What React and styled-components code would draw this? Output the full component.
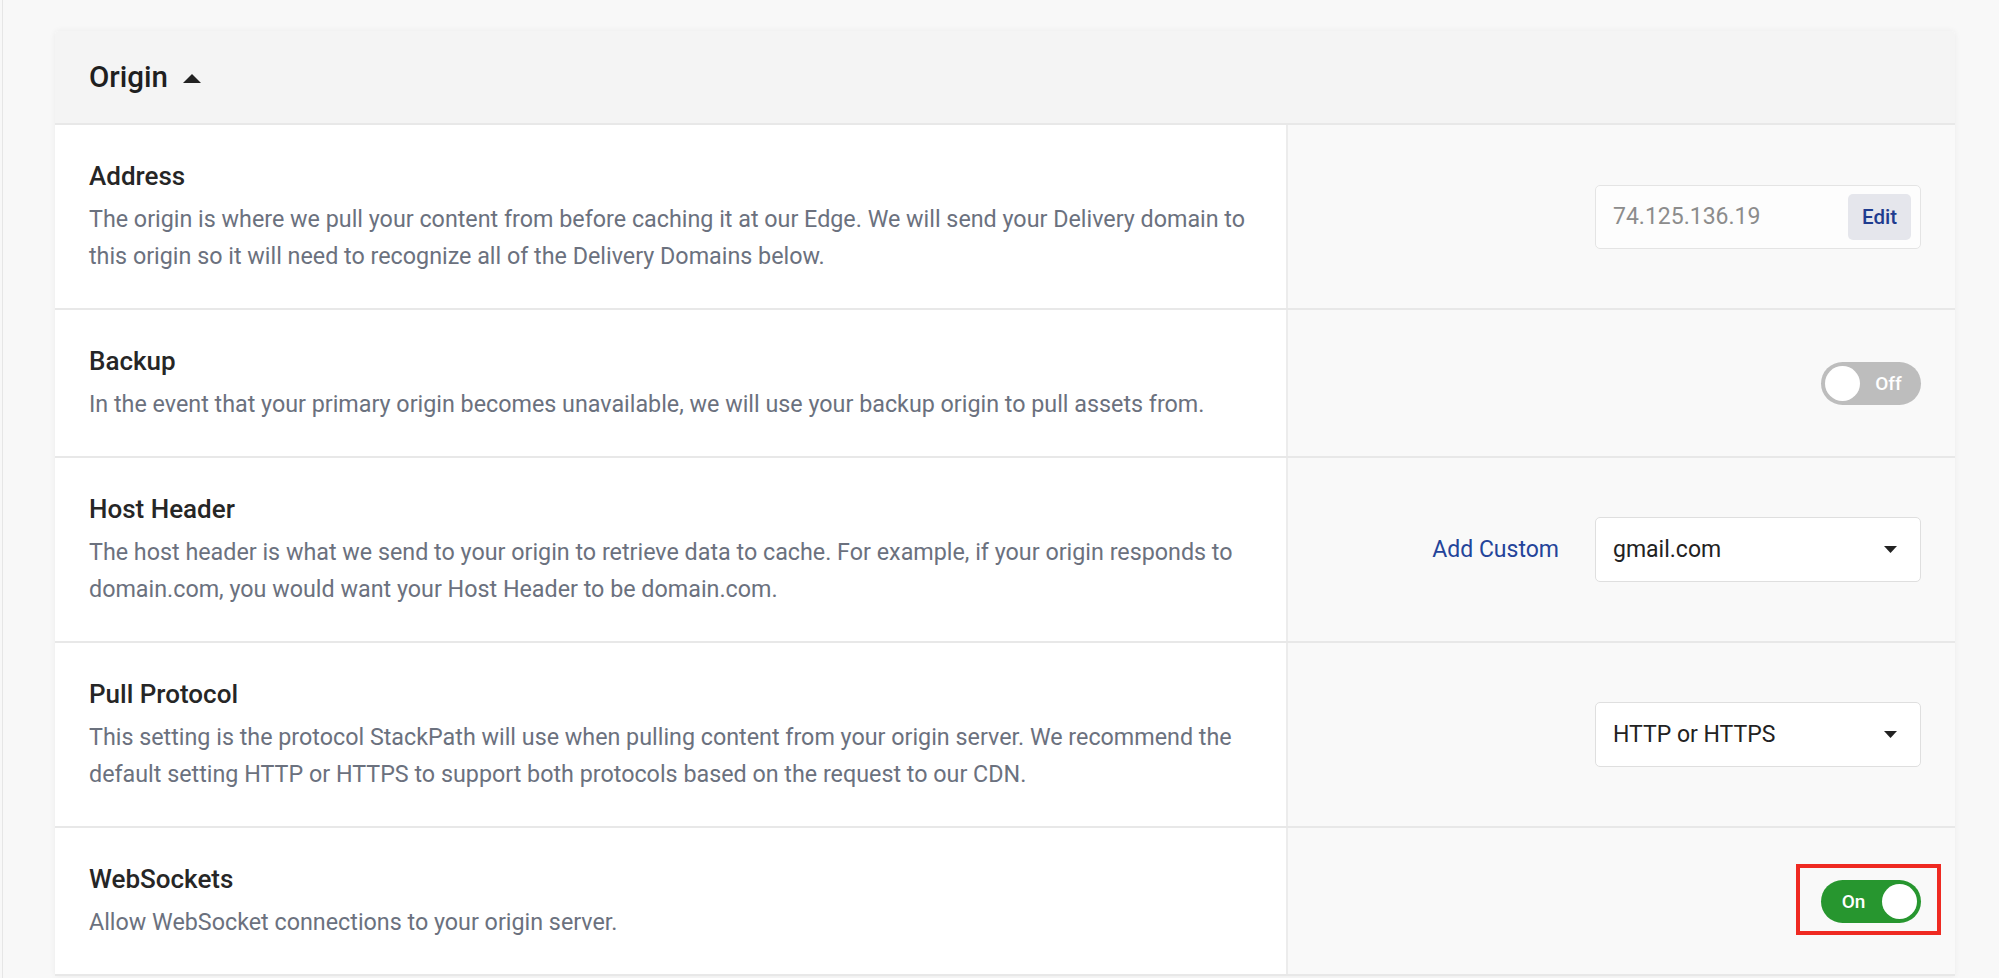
import React from "react";
import styled, { createGlobalStyle } from "styled-components";

const GlobalStyle = createGlobalStyle`
  html, body {
    margin: 0;
    padding: 0;
    background: #f8f8f8;
  }
  body {
    font-family: Roboto, "Noto Sans", "Liberation Sans", sans-serif;
    -webkit-font-smoothing: antialiased;
  }
`;

const settings = [
  {
    title: "Address",
    text: "The origin is where we pull your content from before caching it at our Edge. We will send your Delivery domain to this origin so it will need to recognize all of the Delivery Domains below.",
    control: "address",
  },
  {
    title: "Backup",
    text: "In the event that your primary origin becomes unavailable, we will use your backup origin to pull assets from.",
    control: "backup",
  },
  {
    title: "Host Header",
    text: "The host header is what we send to your origin to retrieve data to cache. For example, if your origin responds to domain.com, you would want your Host Header to be domain.com.",
    control: "host",
  },
  {
    title: "Pull Protocol",
    text: "This setting is the protocol StackPath will use when pulling content from your origin server. We recommend the default setting HTTP or HTTPS to support both protocols based on the request to our CDN.",
    control: "protocol",
  },
  {
    title: "WebSockets",
    text: "Allow WebSocket connections to your origin server.",
    control: "websockets",
  },
];

const Caret = () => (
  <svg width="13" height="7" viewBox="0 0 13 7">
    <polygon points="0,0 13,0 6.5,7" fill="#222" />
  </svg>
);

const Toggle = ({ on }) => (
  <Switch on={on}>
    {on ? (
      <>
        <SwitchLabel>On</SwitchLabel>
        <Knob />
      </>
    ) : (
      <>
        <Knob />
        <SwitchLabel>Off</SwitchLabel>
      </>
    )}
  </Switch>
);

const Select = ({ value }) => (
  <SelectBox>
    <span>{value}</span>
    <Caret />
  </SelectBox>
);

const renderControl = (kind) => {
  switch (kind) {
    case "address":
      return (
        <InputBox>
          <InputValue>74.125.136.19</InputValue>
          <EditButton>Edit</EditButton>
        </InputBox>
      );
    case "backup":
      return <Toggle on={false} />;
    case "host":
      return (
        <>
          <LinkButton>Add Custom</LinkButton>
          <Select value="gmail.com" />
        </>
      );
    case "protocol":
      return <Select value="HTTP or HTTPS" />;
    case "websockets":
      return (
        <Highlighted>
          <Toggle on />
          <Marker />
        </Highlighted>
      );
    default:
      return null;
  }
};

const App = () => {
  return (
    <Page>
      <GlobalStyle />
      <Card>
        <CardHeader>
          <HeaderTitle>Origin</HeaderTitle>
          <HeaderCaret>
            <svg width="18" height="9" viewBox="0 0 18 9">
              <polygon points="0,9 18,9 9,0" fill="#222" />
            </svg>
          </HeaderCaret>
        </CardHeader>
        {settings.map((s) => (
          <Row key={s.title}>
            <Info>
              <Title>{s.title}</Title>
              <Description>{s.text}</Description>
            </Info>
            <Control>{renderControl(s.control)}</Control>
          </Row>
        ))}
      </Card>
    </Page>
  );
};

const Page = styled.div`
  min-height: 100vh;
  margin-left: 2px;
  border-left: 1px solid #e6e6e6;
  padding: 31px 44px 40px 52px;
  box-sizing: border-box;
`;

const Card = styled.div`
  width: 1900px;
  background: #fff;
  border-radius: 4px 4px 0 0;
  box-shadow: 0 0 6px rgba(0, 0, 0, 0.06);
  overflow: hidden;
`;

const CardHeader = styled.div`
  display: flex;
  align-items: center;
  height: 92px;
  padding-left: 34px;
  background: #f4f4f4;
  border-bottom: 2px solid #e8e8e8;
`;

const HeaderTitle = styled.h2`
  margin: 0;
  font-size: 29.5px;
  font-weight: 500;
  color: #1f1f1f;
`;

const HeaderCaret = styled.span`
  display: flex;
  margin-left: 15px;
  margin-top: 2px;
`;

const Row = styled.div`
  display: grid;
  grid-template-columns: 1231px 1fr;
  border-bottom: 2px solid #e8e8e8;
`;

const Info = styled.div`
  padding: 36px 28px 33px 34px;
  background: #fff;
`;

const Title = styled.h3`
  margin: 0;
  font-size: 26px;
  line-height: 30px;
  font-weight: 500;
  color: #262626;
`;

const Description = styled.p`
  margin: 10px 0 0;
  font-size: 23.3px;
  line-height: 37px;
  color: #6b717e;
`;

const Control = styled.div`
  display: flex;
  align-items: center;
  justify-content: flex-end;
  gap: 36px;
  padding-right: 34px;
  background: #f9f9f9;
  border-left: 2px solid #ececec;
`;

const InputBox = styled.div`
  display: flex;
  align-items: center;
  justify-content: space-between;
  width: 326px;
  height: 64px;
  box-sizing: border-box;
  padding: 8px 9px 8px 17px;
  background: #fdfdfd;
  border: 1px solid #e4e4e4;
  border-radius: 5px;
`;

const InputValue = styled.span`
  font-size: 23px;
  color: #8c8c8c;
`;

const EditButton = styled.button`
  width: 63px;
  height: 46px;
  border: none;
  border-radius: 5px;
  background: #e5e6ec;
  color: #1f3c8f;
  font-family: inherit;
  font-size: 20.5px;
  font-weight: 500;
  padding: 0;
`;

const LinkButton = styled.a`
  font-size: 23px;
  color: #24449a;
  cursor: pointer;
`;

const SelectBox = styled.div`
  display: flex;
  align-items: center;
  justify-content: space-between;
  width: 326px;
  height: 65px;
  box-sizing: border-box;
  padding: 0 23px 0 17px;
  background: #fff;
  border: 1.5px solid #dfdfdf;
  border-radius: 5px;
  font-size: 23px;
  color: #222;
`;

const Switch = styled.div`
  display: flex;
  align-items: center;
  width: 100px;
  height: 43px;
  box-sizing: border-box;
  padding: 0 4px;
  border-radius: 22px;
  background: ${(p) => (p.on ? "#27962f" : "#bdbdbd")};
`;

const Knob = styled.span`
  width: 35px;
  height: 35px;
  border-radius: 50%;
  background: #fff;
  flex-shrink: 0;
`;

const SwitchLabel = styled.span`
  flex: 1;
  text-align: center;
  font-size: 19px;
  font-weight: 500;
  color: #fff;
`;

// red annotation box drawn over the websockets toggle
const Highlighted = styled.div`
  position: relative;
`;

const Marker = styled.span`
  position: absolute;
  top: -16px;
  bottom: -12px;
  left: -25px;
  right: -20px;
  border: 4px solid #ef2a22;
  pointer-events: none;
`;

export default App;
